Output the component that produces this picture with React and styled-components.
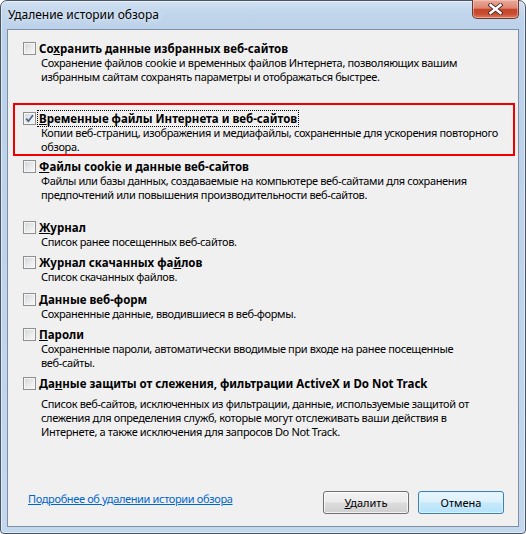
import styled, { createGlobalStyle } from 'styled-components'

const UI = `"Noto Sans", "Open Sans", "DejaVu Sans", sans-serif`

const GlobalStyle = createGlobalStyle`
  body {
    margin: 0;
    background: #ffffff;
  }
`

const Window = styled.div`
  box-sizing: border-box;
  width: 526px;
  height: 534px;
  display: flex;
  flex-direction: column;
  border: 1px solid #4a5564;
  border-radius: 7px 7px 4px 4px;
  background: linear-gradient(180deg, #d3e2f3 0px, #c2d6ec 10px, #bcd2ea 28px, #c3d7ed 100%);
  box-shadow: inset 0 0 0 1px rgba(255, 255, 255, 0.5);
  font-family: ${UI};
  color: #000000;
`

const TitleBar = styled.div`
  display: flex;
  align-items: flex-start;
  height: 28px;
  padding-left: 7px;
`

const Caption = styled.div`
  font-size: 12px;
  line-height: 28px;
  color: #000000;
  text-shadow: 0 0 6px rgba(255, 255, 255, 0.9);
`

const CloseButton = styled.div`
  box-sizing: border-box;
  width: 47px;
  height: 19px;
  margin: -1px 6px 0 auto;
  display: flex;
  align-items: center;
  justify-content: center;
  border: 1px solid #6a3a33;
  border-top: none;
  border-radius: 0 0 5px 5px;
  background: linear-gradient(180deg, #e9aa9a 0%, #de8672 45%, #c8452c 52%, #c84b30 75%, #dc7a5c 100%);
  box-shadow: inset 0 0 0 1px rgba(255, 220, 210, 0.45);
`

const Client = styled.div`
  flex: 1;
  display: flex;
  flex-direction: column;
  margin: 0 6px 6px;
  padding: 11px 0 12px;
  border: 1px solid #7f8ea2;
  background: #f0f0f0;
`

const Option = styled.div`
  margin: ${({ $gap, $highlight }) => ($highlight ? `${$gap}px 3px 0 5px` : `${$gap}px 0 0`)};
  padding: ${({ $highlight }) => ($highlight ? '6px 0 0 8px' : '0 0 0 15px')};
  border: ${({ $highlight }) => ($highlight ? '2px solid #ee0000' : 'none')};
`

const Row = styled.div`
  display: flex;
  align-items: center;
  height: 15px;
`

const Check = styled.span`
  box-sizing: border-box;
  flex: none;
  width: 13px;
  height: 13px;
  margin-right: 3px;
  display: flex;
  align-items: center;
  justify-content: center;
  border: 1px solid #8e8f8f;
  background: linear-gradient(135deg, #d3d5d8 0%, #e9eaeb 55%, #fafafa 100%);
  box-shadow: inset 0 0 0 1px #f6f6f6;
`

const Label = styled.span`
  font-size: 11.5px;
  font-weight: 700;
  line-height: 15px;
  white-space: nowrap;
  padding: 0 1px;
  margin-left: -1px;
  outline: ${({ $focused }) => ($focused ? '1px dotted #000000' : 'none')};
`

const Desc = styled.div`
  margin-top: ${({ $gap }) => $gap}px;
  padding-left: 18px;
  font-size: 11px;
  letter-spacing: -0.35px;
  line-height: 14px;
  white-space: nowrap;
`

const Footer = styled.div`
  margin-top: auto;
  display: flex;
  align-items: flex-start;
  padding: 0 14px 0 20px;
`

const HelpLink = styled.a`
  font-size: 11px;
  letter-spacing: -0.35px;
  line-height: 15px;
  color: #0066cc;
  text-decoration: underline;
  cursor: pointer;
`

const Buttons = styled.div`
  margin-left: auto;
  display: flex;
  gap: 9px;
`

const Button = styled.button`
  box-sizing: border-box;
  width: 86px;
  height: 23px;
  padding: 0;
  border: 1px solid ${({ $default }) => ($default ? '#3c7fb1' : '#707070')};
  border-radius: 3px;
  font-family: ${UI};
  font-size: 11px;
  color: #000000;
  background: ${({ $default }) =>
    $default
      ? 'linear-gradient(180deg, #e8f6fd 0%, #dcf1fc 48%, #c6e9fb 52%, #b7e2f9 100%)'
      : 'linear-gradient(180deg, #f3f3f3 0%, #ebebeb 48%, #dddddd 52%, #cfcfcf 100%)'};
  box-shadow: inset 0 0 0 1px ${({ $default }) => ($default ? 'rgba(220, 245, 255, 0.9)' : 'rgba(255, 255, 255, 0.75)')};
`

const options = [
  {
    title: ['Со', 'х', 'ранить данные избранных веб-сайтов'],
    gap: 0,
    desc: [
      'Сохранение файлов cookie и временных файлов Интернета, позволяющих вашим',
      'избранным сайтам сохранять параметры и отображаться быстрее.',
    ],
  },
  {
    title: ['', 'В', 'ременные файлы Интернета и веб-сайтов'],
    gap: 19,
    checked: true,
    focused: true,
    highlight: true,
    desc: [
      'Копии веб-страниц, изображения и медиафайлы, сохраненные для ускорения повторного',
      'обзора.',
    ],
  },
  {
    title: ['', 'Ф', 'айлы cookie и данные веб-сайтов'],
    gap: 3,
    desc: [
      'Файлы или базы данных, создаваемые на компьютере веб-сайтами для сохранения',
      'предпочтений или повышения производительности веб-сайтов.',
    ],
  },
  {
    title: ['', 'Ж', 'урнал'],
    gap: 18,
    desc: ['Список ранее посещенных веб-сайтов.'],
  },
  {
    title: ['Журнал скачанных фа', 'й', 'лов'],
    gap: 6,
    desc: ['Список скачанных файлов.'],
  },
  {
    title: ['', 'Д', 'анные веб-форм'],
    gap: 8,
    desc: ['Сохраненные данные, вводившиеся в веб-формы.'],
  },
  {
    title: ['', 'П', 'ароли'],
    gap: 6,
    desc: [
      'Сохраненные пароли, автоматически вводимые при входе на ранее посещенные',
      'веб-сайты.',
    ],
  },
  {
    title: ['Да', 'н', 'ные защиты от слежения, фильтрации ActiveX и Do Not Track'],
    gap: 6,
    descGap: 6,
    desc: [
      'Список веб-сайтов, исключенных из фильтрации, данные, используемые защитой от',
      'слежения для определения служб, которые могут отслеживать ваши действия в',
      'Интернете, а также исключения для запросов Do Not Track.',
    ],
  },
]

function CheckMark() {
  return (
    <svg width="9" height="9" viewBox="0 0 9 9">
      <path d="M1.2 4.6 L3.4 7.2 L7.9 1.2" fill="none" stroke="#4c5f8f" strokeWidth="1.7" />
    </svg>
  )
}

function CloseGlyph() {
  return (
    <svg width="15" height="12" viewBox="0 0 15 12">
      <path d="M2.5 2 L12.5 10 M12.5 2 L2.5 10" stroke="#4b2b26" strokeWidth="4.2" strokeLinecap="square" />
      <path d="M2.5 2 L12.5 10 M12.5 2 L2.5 10" stroke="#ffffff" strokeWidth="2.4" strokeLinecap="square" />
    </svg>
  )
}

function App() {
  return (
    <>
      <GlobalStyle />
      <Window>
        <TitleBar>
          <Caption>Удаление истории обзора</Caption>
          <CloseButton>
            <CloseGlyph />
          </CloseButton>
        </TitleBar>
        <Client>
          {options.map((option, index) => (
            <Option
              key={`option-${index}`}
              $gap={option.gap}
              $highlight={option.highlight}
            >
              <Row>
                <Check>{option.checked && <CheckMark />}</Check>
                <Label $focused={option.focused}>
                  {option.title[0]}
                  <u>{option.title[1]}</u>
                  {option.title[2]}
                </Label>
              </Row>
              <Desc $gap={option.descGap || 0}>
                {option.desc.map((line) => (
                  <div key={line}>{line}</div>
                ))}
              </Desc>
            </Option>
          ))}
          <Footer>
            <HelpLink>Подробнее об удалении истории обзора</HelpLink>
            <Buttons>
              <Button>
                <u>У</u>далить
              </Button>
              <Button $default>Отмена</Button>
            </Buttons>
          </Footer>
        </Client>
      </Window>
    </>
  )
}

export default App
